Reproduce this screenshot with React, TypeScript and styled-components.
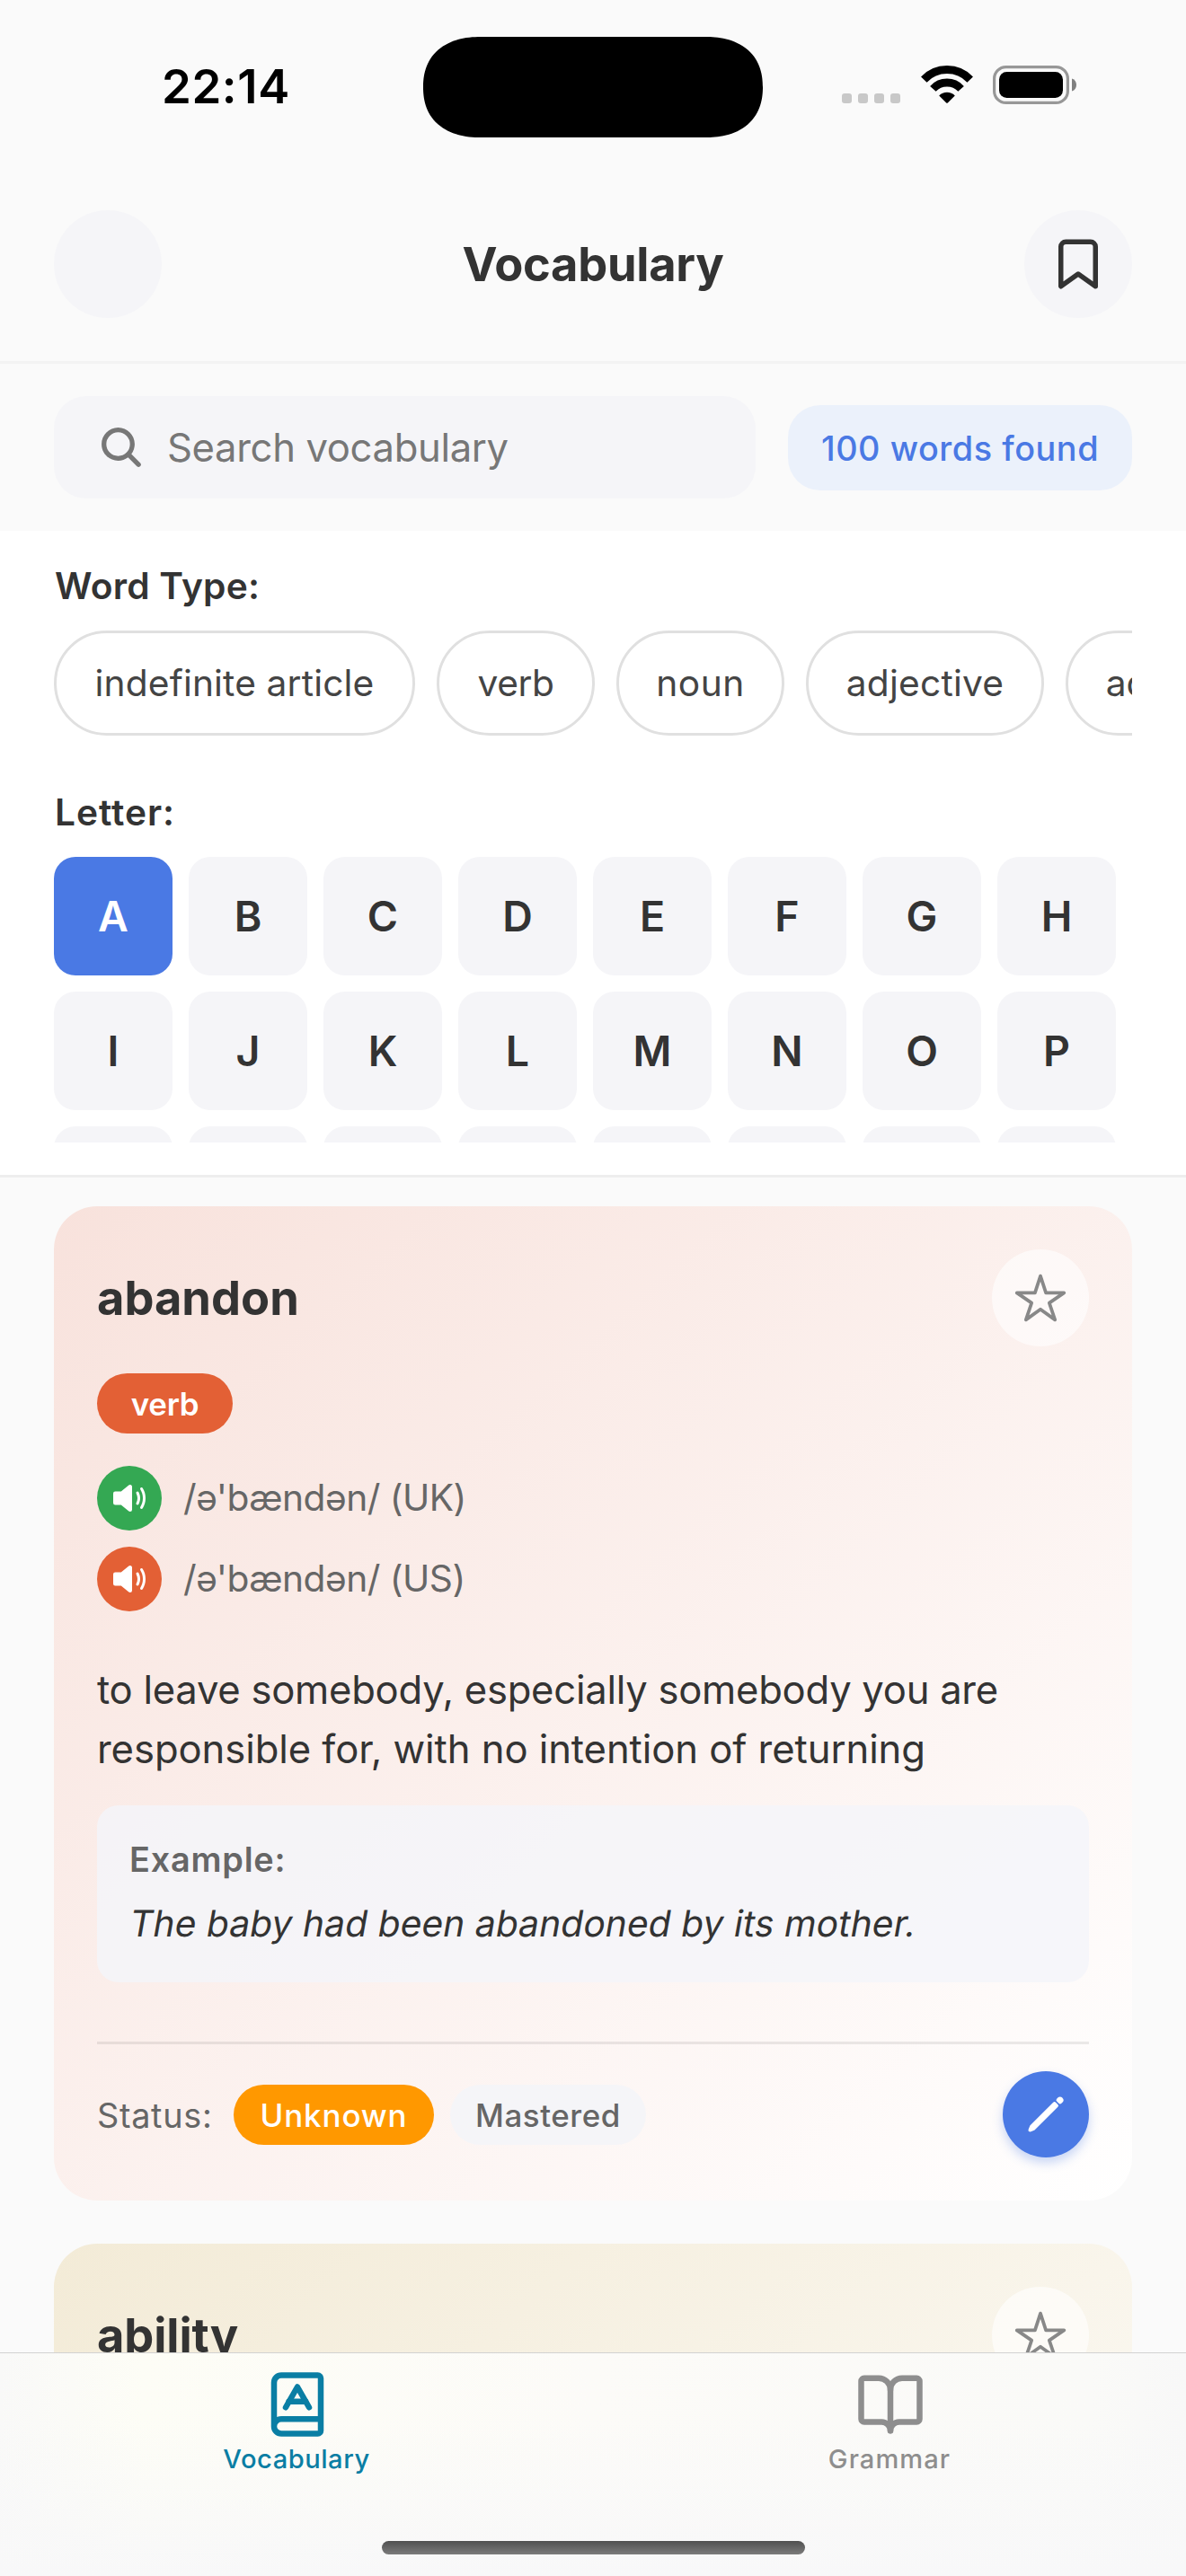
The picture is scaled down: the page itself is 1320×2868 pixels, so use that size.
import React from 'react';
import styled, { createGlobalStyle } from 'styled-components';
import { IoSearch, IoStarOutline, IoVolumeMedium, IoPencil } from 'react-icons/io5';

const GlobalStyle = createGlobalStyle`
  html, body { margin: 0; padding: 0; background: #fafafa; }
  body { font-family: Inter, 'Liberation Sans', sans-serif; color: #333333; }
  *, *::before, *::after { box-sizing: border-box; }
  button { font: inherit; color: inherit; margin: 0; padding: 0; border: 0; background: none; }
`;

const Screen = styled.main`
  display: flex;
  flex-direction: column;
  width: 1320px;
  height: 2868px;
  overflow: hidden;
  background: #fafafa;
`;

/* ---------- status bar ---------- */

const StatusBar = styled.div`
  flex: none;
  display: grid;
  grid-template-columns: 471px 378px 471px;
  height: 186px;
  padding-top: 41px;
`;

const Clock = styled.div`
  height: 112px;
  padding-left: 180px;
  font-size: 52.7px;
  font-weight: 600;
  line-height: 110px;
  letter-spacing: 0.6px;
  color: #000;
`;

const Island = styled.div`
  height: 112px;
  border-radius: 64px / 56px;
  corner-shape: superellipse(1.2);
  background: #000;
`;

const Indicators = styled.div`
  display: flex;
  align-items: flex-end;
  height: 75px;
  padding-left: 88px;
`;

const SignalDots = styled.div`
  display: flex;
  gap: 7px;
  margin-bottom: 1px;
`;

const SignalDot = styled.span`
  width: 11px;
  height: 11px;
  border-radius: 3px;
  background: #c8c8c8;
`;

const WifiSvg = styled.svg`
  display: block;
  margin: 0 22px 1px 23px;
`;

const BatterySvg = styled.svg`
  display: block;
`;

/* ---------- header ---------- */

const Header = styled.header`
  flex: none;
  display: flex;
  align-items: center;
  justify-content: space-between;
  height: 219px;
  padding: 0 60px;
  border-bottom: 3px solid #f3f3f3;
`;

const RoundButton = styled.button`
  display: flex;
  align-items: center;
  justify-content: center;
  width: 120px;
  height: 120px;
  border-radius: 50%;
  background: #f5f5f8;
`;

const Title = styled.h1`
  margin: 0;
  font-size: 52.4px;
  font-weight: 700;
  line-height: 64px;
  letter-spacing: -0.29px;
`;

/* ---------- search ---------- */

const SearchSection = styled.section`
  flex: none;
  display: flex;
  align-items: center;
  gap: 36px;
  height: 186px;
  padding: 0 60px;
`;

const SearchBox = styled.div`
  flex: 1;
  display: flex;
  align-items: center;
  height: 114px;
  padding-left: 48px;
  border-radius: 36px;
  background: #f5f5f8;
  color: #777777;
`;

const Placeholder = styled.span`
  margin-left: 24px;
  font-size: 43.6px;
  letter-spacing: -0.35px;
`;

const CountPill = styled.div`
  display: flex;
  align-items: center;
  justify-content: center;
  width: 383px;
  height: 95px;
  margin-top: 1px;
  padding-top: 1px;
  border-radius: 36px;
  background: #ebf1fb;
  color: #4a79e4;
  font-size: 37.8px;
  font-weight: 500;
  letter-spacing: 0.56px;
`;

/* ---------- filters ---------- */

const FilterPanel = styled.section`
  flex: none;
  height: 720px;
  padding: 36px 60px;
  border-bottom: 3px solid #eeeeee;
  background: #ffffff;
`;

const FilterLabel = styled.h2<{ $track: number }>`
  margin: 0 0 24px;
  padding-left: 1px;
  font-size: 40.7px;
  font-weight: 600;
  line-height: 51px;
  letter-spacing: ${(p) => p.$track}px;
`;

const ChipRow = styled.div`
  display: flex;
  gap: 24px;
  height: 117px;
  margin-bottom: 60px;
  overflow: hidden;
`;

const Chip = styled.button<{ $width: number; $track: number }>`
  flex: none;
  display: flex;
  align-items: center;
  justify-content: center;
  width: ${(p) => p.$width}px;
  height: 117px;
  border: 3px solid #e0e0e0;
  border-radius: 60px;
  background: #ffffff;
  color: #444444;
  font-size: 40.7px;
  letter-spacing: ${(p) => p.$track}px;
`;

const LetterGrid = styled.div`
  display: grid;
  grid-template-columns: repeat(8, 132px);
  grid-auto-rows: 132px;
  gap: 18px;
  height: 318px;
  overflow: hidden;
`;

const LetterKey = styled.button<{ $active: boolean }>`
  border-radius: 24px;
  background: ${(p) => (p.$active ? '#4a79e4' : '#f5f5f8')};
  color: ${(p) => (p.$active ? '#ffffff' : '#333333')};
  font-size: 46.5px;
  font-weight: 600;
  line-height: 132px;
  text-align: center;
`;

/* ---------- word cards ---------- */

const WordList = styled.section`
  flex: 1;
  min-height: 0;
  display: flex;
  flex-direction: column;
  gap: 48px;
  padding: 32px 60px 0;
  overflow: hidden;
`;

const Card = styled.article<{ $tint: string }>`
  flex: none;
  height: 1107px;
  padding: 48px;
  border-radius: 48px;
  background: linear-gradient(to bottom right, ${(p) => p.$tint}, #ffffff);
`;

const CardHead = styled.div`
  display: flex;
  align-items: center;
  justify-content: space-between;
  height: 108px;
`;

const Word = styled.h3<{ $track: number }>`
  margin: 0;
  font-size: 52.4px;
  font-weight: 700;
  line-height: 64px;
  letter-spacing: ${(p) => p.$track}px;
`;

const StarButton = styled.button`
  display: flex;
  align-items: center;
  justify-content: center;
  width: 108px;
  height: 108px;
  border-radius: 50%;
  background: rgba(255, 255, 255, 0.6);
  color: #888888;
`;

const TypeBadge = styled.div`
  display: flex;
  align-items: center;
  justify-content: center;
  width: 151px;
  height: 67px;
  margin: 30px 0 36px;
  border-radius: 36px;
  background: #e36035;
  color: #ffffff;
  font-size: 34.9px;
  font-weight: 600;
  letter-spacing: -0.29px;
`;

const Pronunciations = styled.div`
  display: flex;
  flex-direction: column;
  gap: 18px;
`;

const Pronunciation = styled.div`
  display: flex;
  align-items: center;
  gap: 24px;
  height: 72px;
  color: #666666;
  font-size: 40.7px;
  letter-spacing: -0.52px;
`;

const Ipa = styled.span`
  padding-bottom: 2px;
`;

const Speaker = styled.button<{ $color: string }>`
  display: flex;
  align-items: center;
  justify-content: center;
  width: 72px;
  height: 72px;
  border-radius: 50%;
  background: ${(p) => p.$color};
  color: #ffffff;
`;

const Definition = styled.p`
  margin: 55px 0 29px;
  font-size: 43.6px;
  line-height: 66px;
`;

const DefinitionLine = styled.span<{ $track: number }>`
  display: block;
  white-space: nowrap;
  letter-spacing: ${(p) => p.$track}px;
`;

const ExampleBox = styled.div`
  height: 197px;
  padding: 36px;
  border-radius: 24px;
  background: rgba(244, 245, 250, 0.8);
`;

const ExampleLabel = styled.div`
  margin-bottom: 18px;
  color: #666666;
  font-size: 37.8px;
  font-weight: 600;
  line-height: 48px;
  letter-spacing: 0.8px;
`;

/* Slanted upright letterforms, so that the "a" keeps its two storeys. */
const ExampleText = styled.div`
  width: max-content;
  margin-left: -2px;
  font-size: 40.7px;
  line-height: 60px;
  letter-spacing: 0.09px;
  transform: skewX(-10deg);
  transform-origin: 0 75%;
`;

const CardFooter = styled.div`
  display: flex;
  align-items: center;
  height: 129px;
  margin-top: 66px;
  padding-top: 30px;
  border-top: 3px solid rgba(0, 0, 0, 0.08);
`;

const StatusLabel = styled.span`
  width: 152px;
  padding-top: 2px;
  color: #666666;
  font-size: 37.8px;
  letter-spacing: 0.7px;
`;

const StatusPill = styled.button<{ $width: number; $selected: boolean }>`
  display: flex;
  align-items: center;
  justify-content: center;
  width: ${(p) => p.$width}px;
  height: 67px;
  margin-right: 18px;
  padding-top: 1px;
  border-radius: 36px;
  background: ${(p) => (p.$selected ? '#ff9800' : '#f5f5f8')};
  color: ${(p) => (p.$selected ? '#ffffff' : '#666666')};
  font-size: 34.9px;
  font-weight: ${(p) => (p.$selected ? 500 : 450)};
  letter-spacing: ${(p) => (p.$selected ? 0.88 : 0.55)}px;
`;

const EditButton = styled.button`
  display: flex;
  align-items: center;
  justify-content: center;
  width: 96px;
  height: 96px;
  margin-left: auto;
  border-radius: 50%;
  background: #4a79e4;
  color: #ffffff;
  box-shadow: 0 6px 12px rgba(74, 121, 228, 0.3);
`;

/* ---------- tab bar ---------- */

const TabBar = styled.nav`
  flex: none;
  display: grid;
  grid-template-columns: 1fr 1fr;
  grid-template-rows: 209px 39px;
  height: 249px;
  border-top: 1px solid #d2d2d2;
  background:
    linear-gradient(to bottom, rgba(248, 248, 249, 0) 30%, #f8f8f9 100%),
    linear-gradient(to right, #f9f9f8 0%, #fdfdf6 12%, #fcfbf8 50%, #fafaf8 92%, #f8f8f8 100%);
`;

const Tab = styled.button<{ $active: boolean }>`
  display: flex;
  flex-direction: column;
  align-items: center;
  justify-content: flex-start;
  padding-top: 18px;
  color: ${(p) => (p.$active ? '#0a7ea4' : '#8e8e8e')};
`;

const TabSvg = styled.svg`
  display: block;
  margin-left: 2px;
`;

const TabLabel = styled.span<{ $track: number }>`
  margin-top: 4px;
  font-size: 29.1px;
  font-weight: 500;
  line-height: 36px;
  letter-spacing: ${(p) => p.$track}px;
`;

const HomeIndicator = styled.div`
  grid-column: 1 / -1;
  justify-self: center;
  width: 471px;
  height: 15px;
  border-radius: 8px;
  background: linear-gradient(#505050, #7b7b7b);
`;

const lineIcon = {
  fill: 'none',
  stroke: 'currentColor',
  strokeWidth: 2,
  strokeLinecap: 'round',
  strokeLinejoin: 'round',
} as const;

const BookmarkIcon = () => (
  <svg width="66" height="66" viewBox="0 0 24 24" {...lineIcon}>
    <path d="m19 21-7-5-7 5V5a2 2 0 0 1 2-2h10a2 2 0 0 1 2 2z" />
  </svg>
);

const BookAIcon = () => (
  <TabSvg width="78" height="78" viewBox="0 0 24 24" {...lineIcon}>
    <path d="M4 19.5v-15A2.5 2.5 0 0 1 6.5 2H19a1 1 0 0 1 1 1v18a1 1 0 0 1-1 1H6.5a1 1 0 0 1 0-5H20" />
    <path d="m8 13 4-7 4 7" />
    <path d="M9.1 11h5.7" />
  </TabSvg>
);

const BookOpenIcon = () => (
  <TabSvg width="78" height="78" viewBox="0 0 24 24" {...lineIcon}>
    <path d="M12 7v14" />
    <path d="M3 18a1 1 0 0 1-1-1V4a1 1 0 0 1 1-1h5a4 4 0 0 1 4 4 4 4 0 0 1 4-4h5a1 1 0 0 1 1 1v13a1 1 0 0 1-1 1h-6a3 3 0 0 0-3 3 3 3 0 0 0-3-3z" />
  </TabSvg>
);

const WifiIcon = () => (
  <WifiSvg width="58" height="42" viewBox="0 0 58 42">
    <path d="M3.3 15.6A35.5 35.5 0 0 1 54.7 15.6" fill="none" stroke="#000" strokeWidth="9" />
    <path d="M13.4 25.9A21.1 21.1 0 0 1 44.6 25.9" fill="none" stroke="#000" strokeWidth="8.8" />
    <path d="M20.2 33.4A12.2 12.2 0 0 1 37.8 33.4L29.8 41.4Q29 42.1 28.2 41.4Z" fill="#000" />
  </WifiSvg>
);

const BatteryIcon = () => (
  <BatterySvg width="94" height="43" viewBox="0 0 94 43">
    <rect x="1.6" y="1.6" width="81.8" height="39.8" rx="13" fill="none" stroke="#979797" strokeWidth="3.2" />
    <rect x="7" y="7" width="71" height="29" rx="8.5" fill="#000" />
    <path d="M88 14.5C91.5 15.6 93 18.3 93 21.5S91.5 27.4 88 28.5Z" fill="#808080" />
  </BatterySvg>
);

const wordTypes = [
  { label: 'indefinite article', width: 402, track: 0.15 },
  { label: 'verb', width: 176, track: -0.42 },
  { label: 'noun', width: 187, track: 0.5 },
  { label: 'adjective', width: 265, track: 0.21 },
  { label: 'adverb', width: 224, track: 0 },
];

const letters = 'ABCDEFGHIJKLMNOPQRSTUVWX'.split('');

const accents = [
  { ipa: "/ə'bændən/ (UK)", color: '#34a853' },
  { ipa: "/ə'bændən/ (US)", color: '#e36035' },
];

export default function App() {
  return (
    <Screen>
      <GlobalStyle />

      <StatusBar>
        <Clock>22:14</Clock>
        <Island />
        <Indicators>
          <SignalDots>
            {[0, 1, 2, 3].map((n) => (
              <SignalDot key={n} />
            ))}
          </SignalDots>
          <WifiIcon />
          <BatteryIcon />
        </Indicators>
      </StatusBar>

      <Header>
        <RoundButton />
        <Title>Vocabulary</Title>
        <RoundButton>
          <BookmarkIcon />
        </RoundButton>
      </Header>

      <SearchSection>
        <SearchBox>
          <IoSearch size={54} />
          <Placeholder>Search vocabulary</Placeholder>
        </SearchBox>
        <CountPill>100 words found</CountPill>
      </SearchSection>

      <FilterPanel>
        <FilterLabel $track={0.24}>Word Type:</FilterLabel>
        <ChipRow>
          {wordTypes.map((t) => (
            <Chip key={t.label} $width={t.width} $track={t.track}>
              {t.label}
            </Chip>
          ))}
        </ChipRow>
        <FilterLabel $track={0.95}>Letter:</FilterLabel>
        <LetterGrid>
          {letters.map((l) => (
            <LetterKey key={l} $active={l === 'A'}>
              {l}
            </LetterKey>
          ))}
        </LetterGrid>
      </FilterPanel>

      <WordList>
        <Card $tint="#f8e2dc">
          <CardHead>
            <Word $track={0}>abandon</Word>
            <StarButton>
              <IoStarOutline size={60} />
            </StarButton>
          </CardHead>
          <TypeBadge>verb</TypeBadge>
          <Pronunciations>
            {accents.map((a) => (
              <Pronunciation key={a.ipa}>
                <Speaker $color={a.color}>
                  <IoVolumeMedium size={48} />
                </Speaker>
                <Ipa>{a.ipa}</Ipa>
              </Pronunciation>
            ))}
          </Pronunciations>
          <Definition>
            <DefinitionLine $track={-0.26}>to leave somebody, especially somebody you are</DefinitionLine>
            <DefinitionLine $track={-0.07}>responsible for, with no intention of returning</DefinitionLine>
          </Definition>
          <ExampleBox>
            <ExampleLabel>Example:</ExampleLabel>
            <ExampleText>The baby had been abandoned by its mother.</ExampleText>
          </ExampleBox>
          <CardFooter>
            <StatusLabel>Status:</StatusLabel>
            <StatusPill $width={223} $selected>
              Unknown
            </StatusPill>
            <StatusPill $width={218} $selected={false}>
              Mastered
            </StatusPill>
            <EditButton>
              <IoPencil size={48} />
            </EditButton>
          </CardFooter>
        </Card>

        <Card $tint="#f3ebd7">
          <CardHead>
            <Word $track={-0.11}>ability</Word>
            <StarButton>
              <IoStarOutline size={60} />
            </StarButton>
          </CardHead>
        </Card>
      </WordList>

      <TabBar>
        <Tab $active>
          <BookAIcon />
          <TabLabel $track={0.53}>Vocabulary</TabLabel>
        </Tab>
        <Tab $active={false}>
          <BookOpenIcon />
          <TabLabel $track={1.07}>Grammar</TabLabel>
        </Tab>
        <HomeIndicator />
      </TabBar>
    </Screen>
  );
}
